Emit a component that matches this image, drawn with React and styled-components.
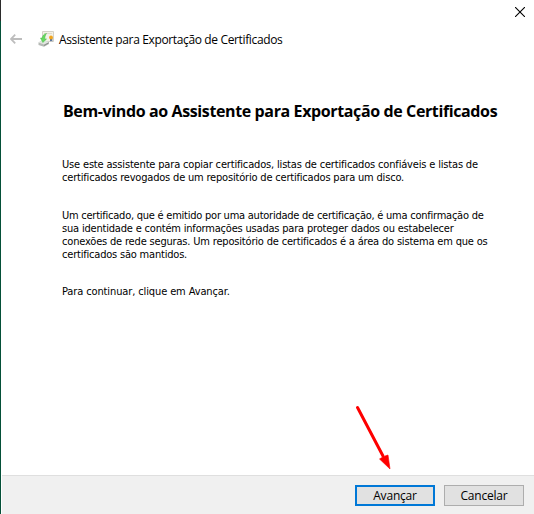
import styled, { createGlobalStyle } from 'styled-components'

const App = () => {
    return (
        <>
            <GlobalStyle />
            <Window>
                <TitleBar>
                    <CloseButton aria-label='Fechar'>
                        <svg width='10' height='10' viewBox='0 0 10 10'>
                            <path d='M0 0L10 10M10 0L0 10' stroke='#000' strokeWidth='1.1' />
                        </svg>
                    </CloseButton>
                </TitleBar>
                <Header>
                    <BackArrow />
                    <CertificateIcon />
                    <HeaderText>Assistente para Exportação de Certificados</HeaderText>
                </Header>
                <Content>
                    <Title>Bem-vindo ao Assistente para Exportação de Certificados</Title>
                    <Paragraph>
                        <Line $spacing={-0.17}>Use este assistente para copiar certificados, listas de certificados confiáveis e listas de</Line>
                        <Line $spacing={-0.19}>certificados revogados de um repositório de certificados para um disco.</Line>
                    </Paragraph>
                    <Paragraph>
                        <Line $spacing={-0.24}>Um certificado, que é emitido por uma autoridade de certificação, é uma confirmação de</Line>
                        <Line $spacing={-0.19}>sua identidade e contém informações usadas para proteger dados ou estabelecer</Line>
                        <Line $spacing={-0.18}>conexões de rede seguras. Um repositório de certificados é a área do sistema em que os</Line>
                        <Line $spacing={-0.2}>certificados são mantidos.</Line>
                    </Paragraph>
                    <Paragraph>
                        <Line $spacing={-0.12}>Para continuar, clique em Avançar.</Line>
                    </Paragraph>
                </Content>
                <Footer>
                    <Button $primary>Avançar</Button>
                    <Button>Cancelar</Button>
                    <Pointer width='40' height='70' viewBox='0 0 40 70'>
                        <path d='M5.5 5.5L31 54' stroke='#fe0000' strokeWidth='3' strokeLinecap='round' />
                        <path d='M38 67L27.5 57L30 55.5L33 54L36 53Z' fill='#fe0000' stroke='#fe0000' strokeWidth='.6' />
                    </Pointer>
                </Footer>
            </Window>
        </>
    )
}

const BackArrow = () => (
    <svg width='12' height='10' viewBox='0 0 12 10' fill='none' stroke='#bdbdbd' strokeWidth='1.8'>
        <path d='M12 5H1M5.2 .7L.9 5L5.2 9.3' />
    </svg>
)

const CertificateIcon = () => (
    <svg width='16' height='16' viewBox='0 0 16 16'>
        <path d='M4.5 .5H15.5V10.5H4.5Z' fill='#f3f1e8' stroke='#d5d2c8' />
        <path d='M6 2.5H14' stroke='#e0dccd' />
        <path d='M.5 11.5L5 9L11 11V13L6 15.8L.5 14Z' fill='#b5b9b5' />
        <path d='M.5 11.5L5 9L11 11L6 13.5Z' fill='#e2e5e1' />
        <path d='M6 14.5L10.5 12' stroke='#888d88' />
        <path d='M8.5 2.5C5.5 3 4.5 5 4.3 7H2.5L4.8 11.5L8.5 8H6.8C6.8 6 7.2 4.2 8.5 2.5Z' fill='#67d95f' stroke='#43b944' strokeWidth='.5' />
        <path d='M12 7H14.3V10.5L13 9.8L12 10.5Z' fill='#526f9c' />
        <circle cx='13' cy='6.5' r='1.9' fill='#f1a51d' />
    </svg>
)

const GlobalStyle = createGlobalStyle`
body{
    margin:0;
    background:#fff;
}
*{
    box-sizing:border-box;
}
`;

const Window = styled.div`
display:flex;
flex-direction:column;
width:534px;
height:514px;
overflow:hidden;
color:#000;
background:linear-gradient(#2b2b2b 21px, #045038 21px) left / 1px 100% no-repeat #fff;
font-family:'DejaVu Sans Condensed', 'DejaVu Sans', sans-serif;
padding-left:1px;
`;

const TitleBar = styled.div`
display:flex;
justify-content:flex-end;
height:24px;
padding:7px 9px 0 0;
`;

const CloseButton = styled.button`
display:flex;
width:10px;
height:10px;
padding:0;
border:none;
background:transparent;
`;

const Header = styled.header`
display:flex;
align-items:center;
height:30px;
padding-left:9px;
svg + svg{
    margin-left:16px;
}
`;

const HeaderText = styled.span`
margin:1px 0 0 5px;
font-family:'Open Sans', sans-serif;
font-size:12px;
letter-spacing:-0.36px;
line-height:16px;
white-space:nowrap;
`;

const Content = styled.main`
flex:1;
padding:47px 0 0 61px;
`;

const Title = styled.h1`
margin:0 0 37px 1px;
font-family:'Open Sans', sans-serif;
font-size:16px;
font-weight:700;
letter-spacing:-0.38px;
line-height:20px;
white-space:nowrap;
`;

const Paragraph = styled.p`
margin:0 0 25px;
font-size:11px;
line-height:13px;
& + & + &{
    margin-top:-1px;
}
`;

const Line = styled.span`
display:block;
width:max-content;
white-space:nowrap;
letter-spacing:${props => props.$spacing || 0}px;
`;

const Footer = styled.footer`
position:relative;
display:flex;
justify-content:flex-end;
gap:9px;
height:39px;
margin-left:1px;
padding:9px 10px 0 0;
border-top:1px solid #dfdfdf;
background:#f0f0f0;
`;

const Button = styled.button`
width:80px;
height:21px;
padding:0;
border:${props => props.$primary ? '2px solid #0078d7' : '1px solid #adadad'};
background:#e1e1e1;
color:#000;
font-family:'Open Sans', sans-serif;
font-size:12px;
letter-spacing:-0.2px;
line-height:16px;
`;

const Pointer = styled.svg`
position:absolute;
left:350px;
top:-74px;
`;

export default App
